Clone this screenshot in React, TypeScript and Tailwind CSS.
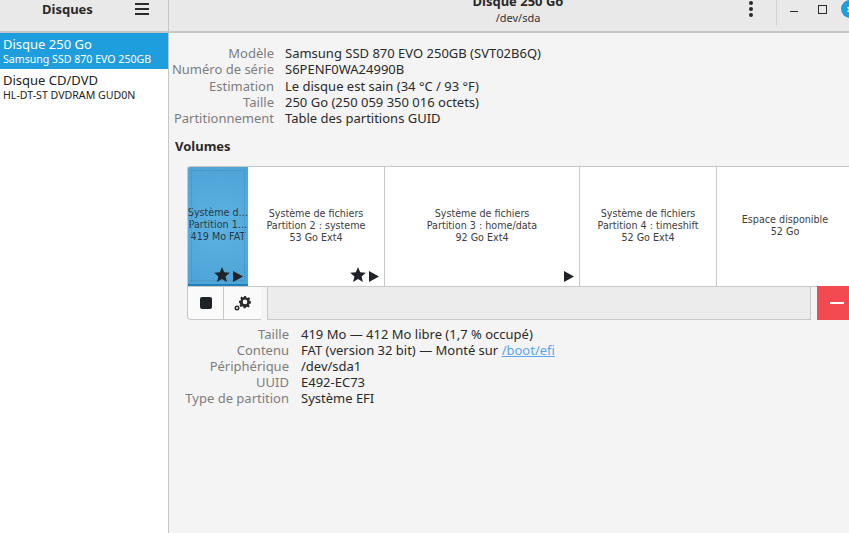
import React from "react";

const uiFont = "font-['Noto_Sans','Open_Sans',sans-serif]";

const driveInfo = [
  ["Modèle", "Samsung SSD 870 EVO 250GB (SVT02B6Q)"],
  ["Numéro de série", "S6PENF0WA24990B"],
  ["Estimation", "Le disque est sain (34 °C / 93 °F)"],
  ["Taille", "250 Go (250 059 350 016 octets)"],
  ["Partitionnement", "Table des partitions GUID"],
];

const Star = () => (
  <svg width="16" height="15" viewBox="0 0 16 15" fill="#1f2226">
    <path d="M8 0l2.200 5.200 5.600.5-4.200 3.700 1.300 5.500L8 12l-4.900 2.900 1.300-5.500L.2 5.700l5.600-.5z" />
  </svg>
);

const Play = () => (
  <svg width="10" height="11" viewBox="0 0 10 11" fill="#1f2226">
    <path d="M0 0l10 5.500L0 11z" />
  </svg>
);

const Partition = ({
  width,
  lines,
  star,
  play,
}: {
  width: string;
  lines: string[];
  star?: boolean;
  play?: boolean;
}) => (
  <div className={`${width} relative shrink-0 h-full flex flex-col items-center justify-center pb-[2px] bg-white border-r border-[#c8c8c8] font-['DejaVu_Sans',sans-serif] text-[9.6px] leading-[12px] text-[#3d3d3d]`}>
    {lines.map((l) => (
      <div key={l} className="whitespace-nowrap">{l}</div>
    ))}
    <div className="absolute right-[5px] bottom-[4px] flex items-end gap-[3px]">
      {star && <Star />}
      {play && <Play />}
    </div>
  </div>
);

export default function App() {
  return (
    <div className={`${uiFont} w-[849px] h-[533px] overflow-hidden flex bg-[#f4f4f4] text-[13px] text-[#2a2a2a]`}>
      <aside className="w-[169px] shrink-0 flex flex-col border-r border-[#c6c6c6]">
        <div className="h-[33px] shrink-0 relative bg-[#e9e9e9] border-b-2 border-[#c6c6c6] flex">
          <span className="ml-[42px] mt-[1px] font-bold text-[13px] leading-[17px]">Disques</span>
          <svg className="absolute left-[135px] top-[3px]" width="15" height="13" viewBox="0 0 15 13" fill="#2a2a2a">
            <rect width="14" height="2" y="0" />
            <rect width="14" height="2" y="5" />
            <rect width="14" height="2" y="10" />
          </svg>
        </div>
        <div className="flex-1 bg-white">
          <div className="h-[36px] bg-[#1f9ede] text-white pl-[3px] pt-[3px]">
            <div className="text-[13px] leading-[17px]">Disque 250 Go</div>
            <div className="text-[10.6px] leading-[13px]">Samsung SSD 870 EVO 250GB</div>
          </div>
          <div className="pl-[3px] pt-[3px] text-[#222]">
            <div className="text-[13px] leading-[17px]">Disque CD/DVD</div>
            <div className="text-[10.6px] leading-[13px]">HL-DT-ST DVDRAM GUD0N</div>
          </div>
        </div>
      </aside>

      <main className="flex-1 min-w-0 flex flex-col">
        <header className="h-[33px] shrink-0 relative bg-[#e9e9e9] border-b-2 border-[#c6c6c6] flex">
          <div className="w-[698px] shrink-0 flex flex-col items-center -mt-[7px]">
            <span className="font-bold text-[13px] leading-[17px]">Disque 250 Go</span>
            <span className="text-[11px] leading-[16px] text-[#333]">/dev/sda</span>
          </div>
          <div className="absolute left-[580px] top-[1px] flex flex-col gap-[2px]">
            <i className="block w-[4px] h-[4px] rounded-full bg-[#2a2a2a]" />
            <i className="block w-[4px] h-[4px] rounded-full bg-[#2a2a2a]" />
            <i className="block w-[4px] h-[4px] rounded-full bg-[#2a2a2a]" />
          </div>
          <div className="absolute left-[607px] top-0 w-px h-[26px] bg-[#d4d4d4]" />
          <div className="absolute left-[621px] top-[11px] w-[8px] h-px bg-[#2a2a2a]" />
          <div className="absolute left-[649px] top-[5px] w-[9px] h-[9px] border border-[#2a2a2a]" />
          <div className="absolute left-[672px] top-0 w-[18px] h-[18px] rounded-full bg-[#1f9ede] flex items-center justify-center text-white font-bold text-[13px] leading-none">×</div>
        </header>

        <div className="flex-1 min-h-0 pt-[12px]">
          <div className="h-[81px] grid grid-cols-[105px_1fr] gap-x-[11px] leading-[16.25px] w-[500px]">
            {driveInfo.map(([k, v]) => (
              <React.Fragment key={k}>
                <div className="text-right text-[#7d7d7d] whitespace-nowrap">{k}</div>
                <div className="whitespace-nowrap">{v}</div>
              </React.Fragment>
            ))}
          </div>

          <div className="ml-[6px] mt-[12px] font-bold leading-[16px]">Volumes</div>

          <div className="ml-[18px] mt-[12px] w-[700px]">
            <div className="h-[121px] flex border border-[#c8c8c8] border-r-0 rounded-tl-[3px] overflow-hidden">
              <div className="w-[60px] shrink-0 h-full relative flex flex-col items-center justify-center pb-[2px] bg-[radial-gradient(circle,#5cb2e2,#4da3d6)] border-b-[2px] border-[#1f7fb8] font-['DejaVu_Sans',sans-serif] text-[9.6px] leading-[12px] text-[#2a3a46]">
                <div className="absolute inset-[3px] border border-dotted border-[#3f8fbf]" />
                <div className="whitespace-nowrap">Système d…</div>
                <div className="whitespace-nowrap">Partition 1…</div>
                <div className="whitespace-nowrap">419 Mo FAT</div>
                <div className="absolute right-[5px] bottom-[2px] flex items-end gap-[3px]">
                  <Star />
                  <Play />
                </div>
              </div>
              <Partition width="w-[137px]" lines={["Système de fichiers", "Partition 2 : systeme", "53 Go Ext4"]} star play />
              <Partition width="w-[195px]" lines={["Système de fichiers", "Partition 3 : home/data", "92 Go Ext4"]} play />
              <Partition width="w-[137px]" lines={["Système de fichiers", "Partition 4 : timeshift", "52 Go Ext4"]} />
              <Partition width="w-[137px]" lines={["Espace disponible", "52 Go"]} />
            </div>
            <div className="h-[33px] flex">
              <div className="w-[74px] shrink-0 flex bg-[#fafafa] border-l border-b border-[#c8c8c8] rounded-bl-[4px]">
                <div className="w-[36px] flex items-center justify-center border-r border-[#c8c8c8]">
                  <div className="w-[12px] h-[12px] rounded-[2px] bg-[#1f2226]" />
                </div>
                <div className="flex-1 flex items-center justify-center">
                  <svg width="17" height="17" viewBox="0 0 17 17" fill="#2a2a2a">
                    <path fillRule="evenodd" d="M10 1h2l.3 1.600 1.200.5 1.300-.9 1.400 1.400-.9 1.300.5 1.200 1.200.3v2l-1.600.3-.5 1.200.9 1.300-1.400 1.400-1.300-.9-1.200.5-.3 1.100h-2l-.3-1.600-1.200-.5-1.300.9-1.400-1.400.9-1.300-.5-1.200L5 7.800v-2l1.600-.3.5-1.200-.9-1.300 1.400-1.400 1.300.9 1.200-.5zM11 4.600a2.300 2.300 0 100 4.600 2.300 2.300 0 000-4.600z" />
                    <path fillRule="evenodd" d="M3 10.500a2.500 2.500 0 110 5 2.500 2.500 0 010-5zM3 12a1 1 0 100 2 1 1 0 000-2z" />
                  </svg>
                </div>
              </div>
              <div className="w-[6px] shrink-0" />
              <div className="w-[544px] shrink-0 -mt-px bg-[#ececec] border border-[#c8c8c8]" />
              <div className="w-[6px] shrink-0" />
              <div className="w-[40px] shrink-0 -mt-px bg-[#f34a52] flex items-center justify-center">
                <div className="w-[14px] h-[2px] bg-white" />
              </div>
            </div>
          </div>

          <div className="grid grid-cols-[120px_1fr] gap-x-[12px] leading-[16px] mt-[6px] w-[560px]">
            {[
              ["Taille", "419 Mo — 412 Mo libre (1,7 % occupé)"],
              ["Contenu", ""],
              ["Périphérique", "/dev/sda1"],
              ["UUID", "E492-EC73"],
              ["Type de partition", "Système EFI"],
            ].map(([k, v]) => (
              <React.Fragment key={k}>
                <div className="text-right text-[#7d7d7d] whitespace-nowrap">{k}</div>
                <div className="whitespace-nowrap">
                  {k === "Contenu" ? (
                    <>
                      FAT (version 32 bit) — Monté sur <span className="text-[#5aa5f0] underline">/boot/efi</span>
                    </>
                  ) : (
                    v
                  )}
                </div>
              </React.Fragment>
            ))}
          </div>
        </div>
      </main>
    </div>
  );
}
